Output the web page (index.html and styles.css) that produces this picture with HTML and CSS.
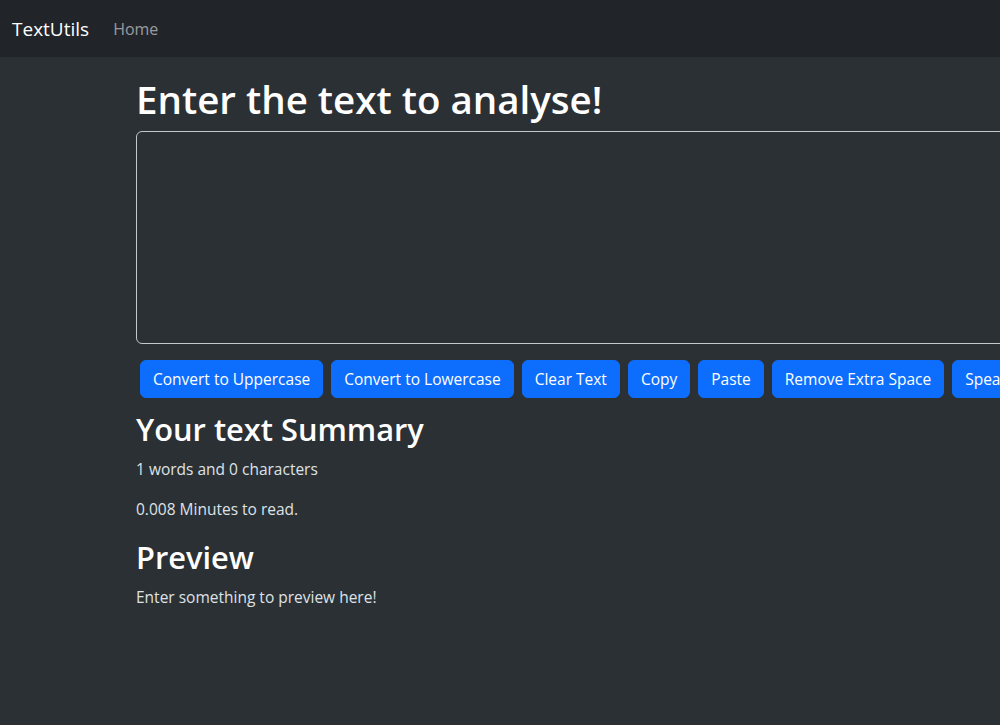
FILE: index.html
```html
<!DOCTYPE html>
<html lang="en">
<head>
<meta charset="utf-8">
<title>TextUtils</title>
<link rel="stylesheet" href="styles.css">
</head>
<body>
<nav class="navbar">
  <a class="brand" href="#">TextUtils</a>
  <a class="nav-link" href="#">Home</a>
</nav>
<main class="container">
  <section class="form-block">
    <h1 class="title">Enter the text to analyse!</h1>
    <textarea class="text-input" rows="8"></textarea>
    <div class="btn-row">
      <button class="btn">Convert to Uppercase</button>
      <button class="btn">Convert to Lowercase</button>
      <button class="btn">Clear Text</button>
      <button class="btn">Copy</button>
      <button class="btn">Paste</button>
      <button class="btn">Remove Extra Space</button>
      <button class="btn">Speak</button>
    </div>
  </section>
  <section class="summary">
    <h2 class="subtitle">Your text Summary</h2>
    <p class="para">1 words and 0 characters</p>
    <p class="para">0.008 Minutes to read.</p>
    <h2 class="subtitle">Preview</h2>
    <p class="para">Enter something to preview here!</p>
  </section>
</main>
</body>
</html>
```

FILE: styles.css
```css
* { box-sizing: border-box; }
html, body { margin: 0; padding: 0; }
body {
  width: 1000px;
  height: 725px;
  overflow: hidden;
  background: #2b3035;
  color: #dee2e6;
  font-family: "Open Sans", "Noto Sans", sans-serif;
  font-size: 15.5px;
  line-height: 24px;
}
.navbar {
  height: 57px;
  background: #212529;
  display: flex;
  align-items: center;
  padding: 0 12px;
}
.brand {
  color: #fff;
  text-decoration: none;
  font-size: 19px;
  line-height: 30px;
  margin-right: 24px;
}
.nav-link {
  color: rgba(255,255,255,0.55);
  text-decoration: none;
  font-size: 16px;
}
.container {
  width: 1320px;
  margin-left: 124px;
  padding: 0 12px;
}
.form-block { margin-top: 18px; }
.title {
  margin: 0 0 8px;
  font-size: 38.5px;
  font-weight: 600;
  line-height: 48px;
  color: #fff;
}
.text-input {
  display: block;
  width: 100%;
  height: 213px;
  background: #2b3035;
  border: 1px solid #c4c8cc;
  border-radius: 6px;
  color: #dee2e6;
  resize: none;
  margin: 0 0 16px;
}
.btn-row {
  display: flex;
  gap: 8px;
  padding-left: 4px;
  white-space: nowrap;
}
.btn {
  flex: none;
  background: #0d6efd;
  color: #fff;
  border: 1px solid #0d6efd;
  border-radius: 6px;
  padding: 6px 12px;
  font-family: inherit;
  font-size: 15.5px;
  line-height: 24px;
  height: 38px;
}
.summary { margin-top: 11px; }
.subtitle {
  margin: 0 0 8px;
  font-size: 30.8px;
  font-weight: 600;
  line-height: 40px;
  color: #fff;
}
.para { margin: 0 0 16px; }
```
